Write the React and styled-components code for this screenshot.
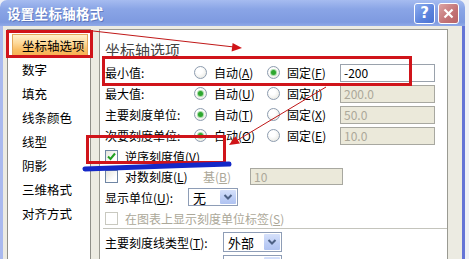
import React from "react";
import styled, { createGlobalStyle } from "styled-components";

const GlobalStyle = createGlobalStyle`
  html, body { margin: 0; padding: 0; }
  body {
    background: #eef0f6;
    font-family: "Noto Sans CJK SC", "Noto Sans", sans-serif;
    font-size: 12px;
    color: #000;
  }
`;

const Screen = styled.div`
  position: relative;
  width: 469px;
  height: 259px;
  overflow: hidden;
  background: #eef0f6;
`;

const Dialog = styled.div`
  width: 465px;
  height: 100%;
  display: flex;
  flex-direction: column;
`;

const TitleBar = styled.div`
  height: 26px;
  flex: none;
  display: flex;
  align-items: center;
  justify-content: space-between;
  padding: 0 6px 0 7px;
  border-radius: 7px 7px 0 0;
  background: linear-gradient(#a6bcf0, #8aa5e6 35%, #7e9ae0 85%, #90aae8);
`;

const Title = styled.span`
  color: #fff;
  font-weight: 700;
  font-size: 13.5px;
  letter-spacing: 0.3px;
  text-shadow: 1px 1px 0 rgba(40, 60, 130, 0.4);
`;

const Caption = styled.div`
  display: flex;
  gap: 3px;
`;

const CaptionButton = styled.div`
  width: 21px;
  height: 21px;
  box-sizing: border-box;
  border: 1px solid #fff;
  border-radius: 3px;
  display: flex;
  align-items: center;
  justify-content: center;
  color: #fff;
  font: bold 15px "DejaVu Sans", sans-serif;
  background: ${(p) =>
    p.$variant === "close"
      ? "linear-gradient(135deg, #dca4a4, #c27275 60%, #b86468)"
      : "linear-gradient(135deg, #8eaef0, #5a82dc 60%, #4a72d2)"};
`;

const Body = styled.div`
  flex: 1;
  display: flex;
  gap: 8px;
  min-height: 0;
  padding: 3px 14px 0 4px;
  background: #ecebe2;
  border-left: 3px solid #a9b9ee;
  border-right: 3px solid #6474d6;
`;

const Sidebar = styled.div`
  width: 84px;
  flex: none;
  box-sizing: border-box;
  border: 1px solid #8f8f88;
  border-bottom: none;
  background: #fff;
  padding-top: 3px;
  display: flex;
  flex-direction: column;
`;

const NavItem = styled.div`
  height: 22px;
  margin: 1px 2px 1px 4px;
  box-sizing: border-box;
  display: flex;
  align-items: center;
  white-space: nowrap;
  font-size: 12.5px;
  border: 1px solid ${(p) => (p.$selected ? "#e2a75a" : "transparent")};
  padding-left: 9px;
  background: ${(p) =>
    p.$selected
      ? "linear-gradient(#fff0cc, #fdd99a 40%, #f9bc62 75%, #f7b255)"
      : "transparent"};
`;

const Panel = styled.div`
  width: 349px;
  flex: none;
  box-sizing: border-box;
  border: 1px solid #9a9a92;
  border-bottom: none;
  background: #fff;
  padding: 9px 0 0 5px;
  display: flex;
  flex-direction: column;
`;

const Heading = styled.div`
  font-size: 15px;
  line-height: 22px;
  height: 22px;
  color: #444;
  margin-bottom: 1px;
`;

const ValueGrid = styled.div`
  display: grid;
  grid-template-columns: 89px 73px 73px 95px;
  grid-auto-rows: 21px;
  align-items: center;
`;

const Label = styled.span`
  white-space: nowrap;
  display: inline-block;
  width: ${(p) => (p.$w ? `${p.$w}px` : "auto")};
  color: ${(p) => (p.$disabled ? "#aca899" : "#000")};
  flex: none;
`;

const Key = styled.span`
  text-decoration: underline;
`;

const Option = styled.label`
  display: flex;
  align-items: center;
  gap: 7px;
  white-space: nowrap;
`;

const Radio = styled.span`
  width: 13px;
  height: 13px;
  box-sizing: border-box;
  border-radius: 50%;
  border: 1px solid #8d9caf;
  background: radial-gradient(circle at 40% 35%, #ffffff 30%, #e2e2da 100%);
  display: flex;
  align-items: center;
  justify-content: center;
  flex: none;
  &::after {
    content: "";
    width: 5px;
    height: 5px;
    border-radius: 50%;
    background: ${(p) => (p.$checked ? "#2ea62e" : "transparent")};
    box-shadow: ${(p) => (p.$checked ? "0 0 0 1px #a8dca8" : "none")};
  }
`;

const TextBox = styled.div`
  width: ${(p) => p.$w}px;
  height: ${(p) => p.$h || 18}px;
  box-sizing: border-box;
  border: 1px solid ${(p) => (p.$disabled ? "#a8a8a0" : "#9aa2ac")};
  background: ${(p) => (p.$disabled ? "#ebe9da" : "#fff")};
  color: ${(p) => (p.$disabled ? "#aca899" : "#000")};
  padding-left: 3px;
  font-size: 12px;
  line-height: ${(p) => (p.$h || 18) - 2}px;
  flex: none;
`;

const Row = styled.div`
  display: flex;
  align-items: center;
  height: ${(p) => p.$h}px;
  margin-top: ${(p) => p.$mt || 0}px;
  flex: none;
`;

const CheckLabel = styled.label`
  display: flex;
  align-items: center;
  gap: 7px;
  white-space: nowrap;
  width: ${(p) => (p.$w ? `${p.$w}px` : "auto")};
  color: ${(p) => (p.$disabled ? "#aca899" : "#000")};
  flex: none;
`;

const Box = styled.span`
  width: 13px;
  height: 13px;
  box-sizing: border-box;
  border: 1px solid ${(p) => (p.$disabled ? "#c9c9c0" : "#6f86a4")};
  background: ${(p) =>
    p.$disabled ? "#fff" : "linear-gradient(135deg, #e4e4dc, #ffffff 70%)"};
  display: flex;
  align-items: center;
  justify-content: center;
  flex: none;
`;

const Select = styled.div`
  width: ${(p) => p.$w}px;
  height: ${(p) => p.$h}px;
  box-sizing: border-box;
  border: 1px solid #8e9db6;
  background: #fff;
  display: flex;
  align-items: stretch;
  flex: none;
`;

const SelectText = styled.span`
  flex: 1;
  padding-left: 4px;
  display: flex;
  align-items: center;
  font-size: 13px;
`;

const DropButton = styled.span`
  width: 16px;
  margin: 1px;
  border-radius: 1px;
  background: linear-gradient(#d6e1fb, #bccdf5 60%, #b0c3f1);
  display: flex;
  align-items: center;
  justify-content: center;
`;

const Separator = styled.div`
  height: 1px;
  background: #c4c4bc;
  margin: 0 0 0 -2px;
  flex: none;
`;

const Overlay = styled.svg`
  position: absolute;
  left: 0;
  top: 0;
  width: 469px;
  height: 259px;
  pointer-events: none;
`;

const Chevron = () => (
  <svg width="10" height="8" viewBox="0 0 10 8">
    <path d="M1.5 2 L5 5.5 L8.5 2" fill="none" stroke="#4d6185" strokeWidth="2" />
  </svg>
);

const Check = () => (
  <svg width="11" height="11" viewBox="0 0 11 11">
    <path d="M2 5.5 L4.5 8 L9 2.5" fill="none" stroke="#22a022" strokeWidth="2" />
  </svg>
);

const Dropdown = ({ w, h, value }) => (
  <Select $w={w} $h={h}>
    <SelectText>{value}</SelectText>
    <DropButton>
      <Chevron />
    </DropButton>
  </Select>
);

const navItems = ["坐标轴选项", "数字", "填充", "线条颜色", "线型", "阴影", "三维格式", "对齐方式"];

const valueRows = [
  { label: "最小值:", auto: "A", fixed: "F", autoOn: false, value: "-200" },
  { label: "最大值:", auto: "U", fixed: "I", autoOn: true, value: "200.0" },
  { label: "主要刻度单位:", auto: "T", fixed: "X", autoOn: true, value: "50.0" },
  { label: "次要刻度单位:", auto: "O", fixed: "E", autoOn: true, value: "10.0" },
];

export default function App() {
  return (
    <Screen>
      <GlobalStyle />
      <Dialog>
        <TitleBar>
          <Title>设置坐标轴格式</Title>
          <Caption>
            <CaptionButton>?</CaptionButton>
            <CaptionButton $variant="close">
              <svg width="11" height="11" viewBox="0 0 11 11">
                <path d="M1.5 1.5 L9.5 9.5 M9.5 1.5 L1.5 9.5" stroke="#fff" strokeWidth="2.2" />
              </svg>
            </CaptionButton>
          </Caption>
        </TitleBar>
        <Body>
          <Sidebar>
            {navItems.map((n, i) => (
              <NavItem key={n} $selected={i === 0}>
                {n}
              </NavItem>
            ))}
          </Sidebar>
          <Panel>
            <Heading>坐标轴选项</Heading>
            <ValueGrid>
              {valueRows.map((r) => (
                <React.Fragment key={r.label}>
                  <Label>{r.label}</Label>
                  <Option>
                    <Radio $checked={r.autoOn} />
                    <span>
                      自动(<Key>{r.auto}</Key>)
                    </span>
                  </Option>
                  <Option>
                    <Radio $checked={!r.autoOn} />
                    <span>
                      固定(<Key>{r.fixed}</Key>)
                    </span>
                  </Option>
                  <TextBox $w={95} $disabled={r.autoOn}>
                    {r.value}
                  </TextBox>
                </React.Fragment>
              ))}
            </ValueGrid>
            <Row $h={20}>
              <CheckLabel>
                <Box>
                  <Check />
                </Box>
                <span>
                  逆序刻度值(<Key>V</Key>)
                </span>
              </CheckLabel>
            </Row>
            <Row $h={20}>
              <CheckLabel $w={98}>
                <Box />
                <span>
                  对数刻度(<Key>L</Key>)
                </span>
              </CheckLabel>
              <Label $w={47} $disabled>
                基(<Key>B</Key>)
              </Label>
              <TextBox $w={93} $h={17} $disabled>
                10
              </TextBox>
            </Row>
            <Row $h={22}>
              <Label $w={83}>
                显示单位(<Key>U</Key>):
              </Label>
              <Dropdown w={50} h={18} value="无" />
            </Row>
            <Row $h={20}>
              <CheckLabel $disabled>
                <Box $disabled />
                <span>
                  在图表上显示刻度单位标签(<Key>S</Key>)
                </span>
              </CheckLabel>
            </Row>
            <Separator />
            <Row $h={22} $mt={2}>
              <Label $w={118}>
                主要刻度线类型(<Key>T</Key>):
              </Label>
              <Dropdown w={59} h={20} value="外部" />
            </Row>
            <Row $h={20} $mt={2}>
              <Label $w={118}> </Label>
              <Dropdown w={59} h={20} value="" />
            </Row>
          </Panel>
        </Body>
      </Dialog>
      <Overlay viewBox="0 0 469 259">
        <g fill="none" stroke="#d0141a" strokeWidth="3">
          <rect x="7.5" y="31.5" width="84" height="25" />
          <rect x="103.5" y="57.5" width="307" height="27" />
          <rect x="87.5" y="136.5" width="137" height="26" />
        </g>
        <g stroke="#c01818" strokeWidth="1">
          <line x1="93" y1="31" x2="234" y2="47" />
          <line x1="326" y1="87" x2="236" y2="141" />
        </g>
        <g fill="#d01418">
          <polygon points="242,48 231.6,51.4 232.6,42.9" />
          <polygon points="229,145 235.2,136.2 240,143.6" />
        </g>
        <path
          d="M85 169 C 120 167.5, 180 165.5, 229 164"
          fill="none"
          stroke="#1428c8"
          strokeWidth="5"
          strokeLinecap="round"
        />
      </Overlay>
    </Screen>
  );
}
